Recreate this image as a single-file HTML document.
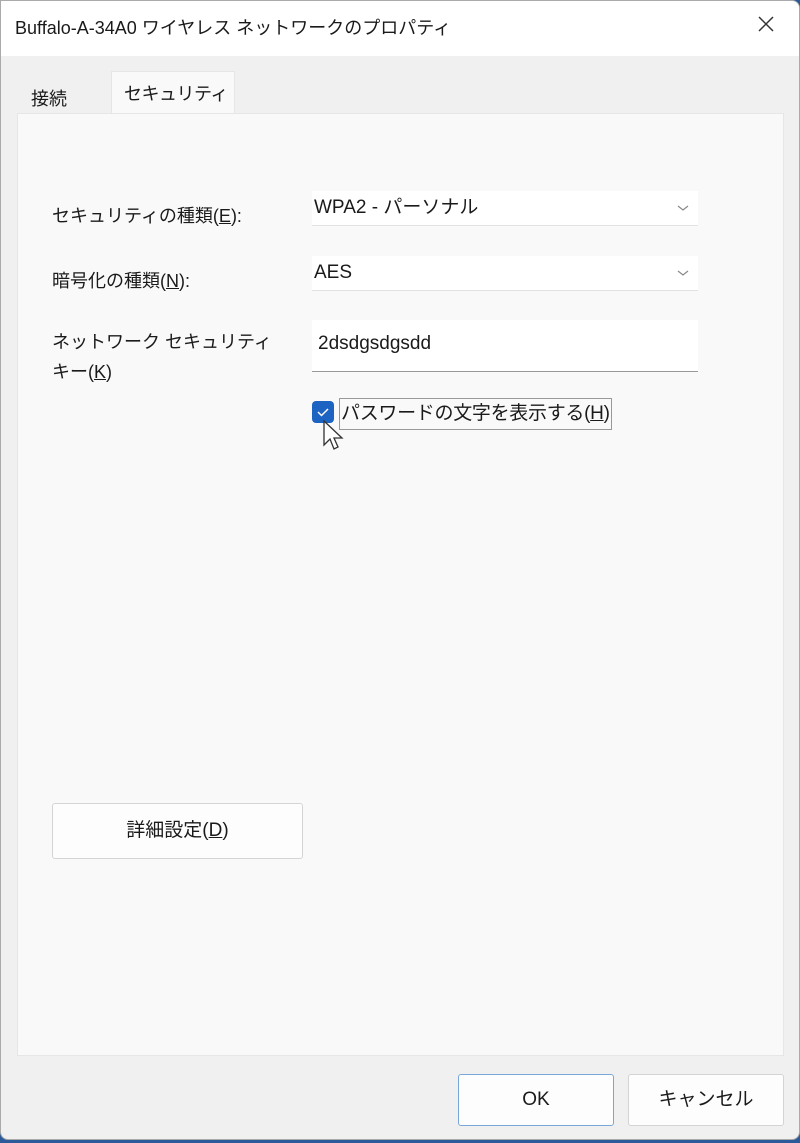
<!DOCTYPE html>
<html><head><meta charset="utf-8"><style>
body{margin:0;width:800px;height:1143px;background:#2a5a9a;position:relative;overflow:hidden;font-family:"Liberation Sans","Noto Sans CJK JP",sans-serif;color:#1a1a1a}
.win{position:absolute;left:0;top:0;width:798px;height:1138px;background:#f0f0f0;border:1px solid #aaa;border-radius:0 8px 8px 8px;overflow:hidden}
.title{position:absolute;left:0;top:0;width:100%;height:55px;background:#fff;font-size:18px;line-height:55px;padding-left:14px;box-sizing:border-box}
.x{position:absolute;right:24px;top:14px;width:18px;height:18px}
.tab{position:absolute;font-size:18px}
.panel{position:absolute;left:16px;top:112px;width:767px;height:943px;background:#f9f9f9;border:1px solid #e6e6e6;box-sizing:border-box}
.lbl{position:absolute;left:51px;font-size:18px}
.f{position:absolute;left:311px;width:386px;background:#fff;box-shadow:0 1px 0 #e2e2e2;font-size:19px;box-sizing:border-box;padding-left:2px}
.chev{position:absolute;right:8px;top:12px}
.btn{position:absolute;background:#fdfdfd;border:1px solid #d4d4d4;border-radius:3px;box-sizing:border-box;text-align:center;font-size:19px}
</style></head><body>
<div class="win">
<div class="title">Buffalo-A-34A0 ワイヤレス ネットワークのプロパティ<svg class="x" viewBox="0 0 18 18"><path d="M2 2L16 16M16 2L2 16" stroke="#333" stroke-width="1.5"/></svg></div>
<div class="tab" style="left:30px;top:84px">接続</div>
<div style="position:absolute;left:110px;top:70px;width:124px;height:44px;background:#f9f9f9;border:1px solid #e6e6e6;border-bottom:none;box-sizing:border-box"></div>
<div class="panel"></div>
<div class="tab" style="left:123px;top:79px;font-size:18px;letter-spacing:-0.5px">セキュリティ</div>
<div class="lbl" style="top:201px">セキュリティの種類(<u>E</u>):</div>
<div class="f" style="top:190px;height:34px;line-height:34px">WPA2 - パーソナル<svg class="chev" width="14" height="10" viewBox="0 0 14 10"><path d="M2 3L7 7L12 3" fill="none" stroke="#888" stroke-width="1.2"/></svg></div>
<div class="lbl" style="top:266px">暗号化の種類(<u>N</u>):</div>
<div class="f" style="top:255px;height:34px;line-height:34px">AES<svg class="chev" width="14" height="10" viewBox="0 0 14 10"><path d="M2 3L7 7L12 3" fill="none" stroke="#888" stroke-width="1.2"/></svg></div>
<div class="lbl" style="top:326px;line-height:30px">ネットワーク セキュリティ<br>キー(<u>K</u>)</div>
<div class="f" style="top:319px;height:51px;line-height:48px;padding-left:6px;box-shadow:0 1px 0 #999">2dsdgsdgsdd</div>
<div style="position:absolute;left:311px;top:400px;width:22px;height:22px;background:#1d63c2;border-radius:4px"><svg width="22" height="22" viewBox="0 0 22 22"><path d="M6 11L9.5 14.5L16 8" fill="none" stroke="#fff" stroke-width="1.5"/></svg></div>
<div style="position:absolute;left:338px;top:397px;height:30px;line-height:30px;border:1px solid #999;padding:0 1px;font-size:19px;letter-spacing:-0.3px">パスワードの文字を表示する(<u>H</u>)</div>
<svg style="position:absolute;left:321px;top:418px" width="26" height="36" viewBox="0 0 26 36"><path d="M2 2 L2 26 L8 20 L12 30 L16 28 L12 19 L20 19 Z" fill="#fff" stroke="#333" stroke-width="1.3"/></svg>
<div class="btn" style="left:51px;top:802px;width:251px;height:56px;line-height:54px">詳細設定(<u>D</u>)</div>
<div class="btn" style="left:457px;top:1073px;width:156px;height:52px;line-height:50px;border-color:#7aa7d8">OK</div>
<div class="btn" style="left:627px;top:1073px;width:156px;height:52px;line-height:50px">キャンセル</div>
</div>
</body></html>
